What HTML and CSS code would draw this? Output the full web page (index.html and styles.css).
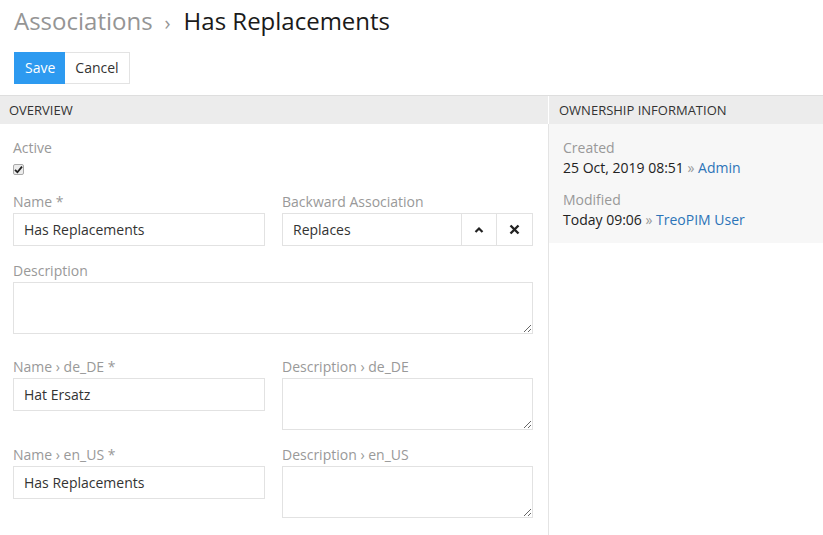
FILE: index.html
```html
<!DOCTYPE html>
<html>
<head>
<meta charset="utf-8">
<link rel="stylesheet" href="styles.css">
</head>
<body>
<div class="page-header">
  <h1 class="title"><span class="crumb">Associations</span><span class="sep">›</span><span class="current">Has Replacements</span></h1>
  <div class="actions">
    <button class="btn btn-primary">Save</button><button class="btn btn-default">Cancel</button>
  </div>
</div>
<div class="panels">
  <div class="panel panel-main">
    <div class="panel-heading main-heading">Overview</div>
    <div class="panel-body main-body">
      <div class="row">
        <div class="cell">
          <div class="label">Active</div>
          <span class="checkbox"><svg width="9" height="9" viewBox="0 0 9 9"><path d="M1 4.8 L3.4 7.2 L8 1.6" fill="none" stroke="#222" stroke-width="1.8"/></svg></span>
        </div>
      </div>
      <div class="row row-inputs">
        <div class="cell">
          <div class="label">Name *</div>
          <input class="input" type="text" value="Has Replacements">
        </div>
        <div class="cell">
          <div class="label">Backward Association</div>
          <div class="input-group">
            <input class="input grp-input" type="text" value="Replaces">
            <span class="grp-btn"><svg width="10" height="8" viewBox="0 0 10 8"><path d="M1.5 6 L5 2.5 L8.5 6" fill="none" stroke="#222" stroke-width="2.2"/></svg></span>
            <span class="grp-btn grp-btn-last"><svg width="11" height="11" viewBox="0 0 11 11"><path d="M1.5 1.5 L9.5 9.5 M9.5 1.5 L1.5 9.5" fill="none" stroke="#222" stroke-width="2.4"/></svg></span>
          </div>
        </div>
      </div>
      <div class="row row-desc">
        <div class="cell full">
          <div class="label">Description</div>
          <textarea class="textarea ta-desc"></textarea>
        </div>
      </div>
      <div class="row row-de">
        <div class="cell">
          <div class="label">Name › de_DE *</div>
          <input class="input" type="text" value="Hat Ersatz">
        </div>
        <div class="cell">
          <div class="label">Description › de_DE</div>
          <textarea class="textarea ta-small"></textarea>
        </div>
      </div>
      <div class="row row-en">
        <div class="cell">
          <div class="label">Name › en_US *</div>
          <input class="input" type="text" value="Has Replacements">
        </div>
        <div class="cell">
          <div class="label">Description › en_US</div>
          <textarea class="textarea ta-small"></textarea>
        </div>
      </div>
    </div>
  </div>
  <div class="panel panel-side">
    <div class="panel-heading">Ownership Information</div>
    <div class="panel-body side-body">
      <div class="info">
        <div class="label">Created</div>
        <div class="value">25 Oct, 2019 08:51 <span class="raquo">»</span> <a class="link">Admin</a></div>
      </div>
      <div class="info">
        <div class="label">Modified</div>
        <div class="value">Today 09:06 <span class="raquo">»</span> <a class="link">TreoPIM User</a></div>
      </div>
    </div>
  </div>
</div>
</body>
</html>
```

FILE: styles.css
```css
* { box-sizing: border-box; }
html, body {
  margin: 0;
  padding: 0;
  background: #fff;
  font-family: "Open Sans", "Liberation Sans", sans-serif;
  font-size: 14px;
  color: #333;
}
.page-header {
  padding: 0 14px;
}
.title {
  margin: 5px 0 0 0;
  font-size: 24px;
  line-height: 32px;
  height: 32px;
  font-weight: 400;
  color: #1a1a1a;
  white-space: nowrap;
}
.crumb { color: #959595; }
.sep {
  color: #959595;
  font-size: 20px;
  margin: 0 13px 0 12px;
}
.actions {
  display: flex;
  margin-top: 15px;
  height: 32px;
}
.btn {
  font-family: inherit;
  font-size: 14px;
  height: 32px;
  padding: 0 10px;
  border: 1px solid #e3e3e3;
  background: #fff;
  color: #333;
  margin: 0;
  border-radius: 0;
  line-height: 30px;
}
.btn-primary {
  background: #2d9af0;
  border-color: #2d9af0;
  color: #fff;
  width: 51px;
}
.btn-default {
  width: 65px;
  border-left: none;
}
.panels {
  display: flex;
  margin-top: 11px;
  border-top: 1px solid #dedede;
  min-height: 440px;
}
.panel-main {
  width: 549px;
  display: flex;
  flex-direction: column;
}
.panel-heading {
  height: 28px;
  line-height: 28px;
  background: #ececec;
  font-size: 13px;
  text-transform: uppercase;
  color: #333;
}
.main-heading {
  padding-left: 9px;
  margin-right: 1px;
}
.main-body {
  flex: 1;
  border-right: 1px solid #e4e4e4;
  padding: 14px 15px 0 13px;
}
.panel-side {
  flex: 1;
}
.panel-side .panel-heading {
  padding-left: 10px;
}
.side-body {
  background: #f7f7f7;
  padding: 14px 14px 13px 14px;
}
.info + .info { margin-top: 12px; }
.label {
  color: #999;
  line-height: 20px;
  height: 21px;
  white-space: nowrap;
}
.info .label { height: 20px; }
.value {
  line-height: 20px;
  color: #222;
  white-space: nowrap;
}
.raquo { color: #999; }
.link { color: #2c74b8; text-decoration: none; }
.row {
  display: flex;
  gap: 17px;
}
.cell { width: 252px; }
.cell + .cell { width: 251px; }
.cell.full { width: 520px; }
.checkbox {
  display: flex;
  align-items: center;
  justify-content: center;
  width: 11px;
  height: 11px;
  margin-top: 5px;
  border: 1px solid #a9a9a9;
  border-radius: 2px;
  background: #ececec;
}
.row-inputs { margin-top: 17px; }
.row-desc { margin-top: 15px; }
.row-de { margin-top: 23px; }
.row-en { margin-top: 15px; }
.input {
  display: block;
  width: 100%;
  height: 33px;
  border: 1px solid #e2e2e2;
  padding: 0 10px;
  font-family: inherit;
  font-size: 14px;
  color: #333;
  background: #fff;
  outline: none;
  border-radius: 0;
}
.input-group {
  display: flex;
  height: 33px;
}
.grp-input { flex: 1 1 auto; width: auto; min-width: 0; }
.grp-btn {
  flex: none;
  width: 35px;
  height: 33px;
  border: 1px solid #e2e2e2;
  border-left: none;
  display: flex;
  align-items: center;
  justify-content: center;
  background: #fff;
}
.grp-btn-last { width: 36px; }
.textarea {
  display: block;
  width: 100%;
  border: 1px solid #e2e2e2;
  font-family: inherit;
  font-size: 14px;
  resize: vertical;
  border-radius: 0;
  outline: none;
  background: #fff;
}
.ta-desc { height: 52px; }
.ta-small { height: 52px; }
```
